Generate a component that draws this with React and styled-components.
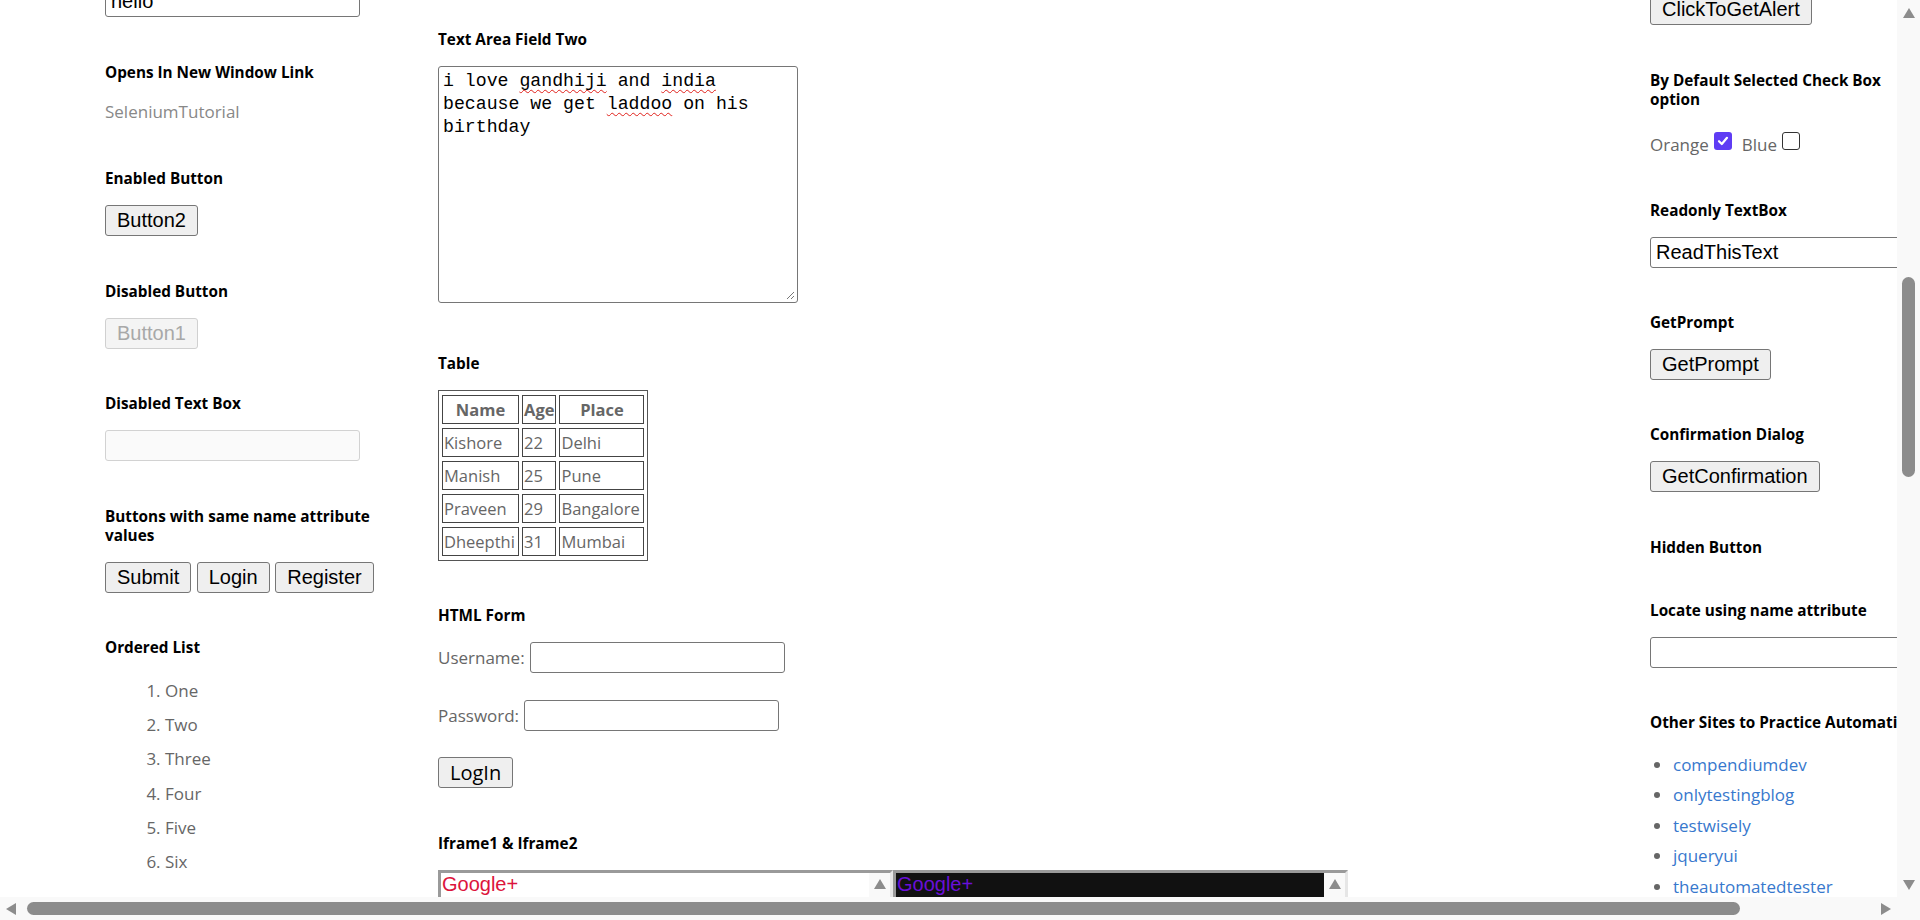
import { styled, createGlobalStyle } from "styled-components"

// scroll state of the page window (what the screenshot shows)
const V_THUMB = { offset: 252, size: 200 }
const H_THUMB = { offset: 5, size: 1713 }

const people = [
    { name: "Kishore", age: 22, place: "Delhi" },
    { name: "Manish", age: 25, place: "Pune" },
    { name: "Praveen", age: 29, place: "Bangalore" },
    { name: "Dheepthi", age: 31, place: "Mumbai" },
]

const numbers = ["One", "Two", "Three", "Four", "Five", "Six"]

const sites = ["compendiumdev", "onlytestingblog", "testwisely", "jqueryui", "theautomatedtester"]

const Arrow = ({ dir }) => {
    const points = {
        up: "6,0 12,10 0,10",
        down: "0,0 12,0 6,10",
        left: "10,0 10,12 0,6",
        right: "0,0 10,6 0,12",
    }[dir]
    const vertical = dir === "up" || dir === "down"
    return (
        <svg width={vertical ? 12 : 10} height={vertical ? 10 : 12} viewBox={vertical ? "0 0 12 10" : "0 0 10 12"}>
            <polygon points={points} fill="#8c8c8c" />
        </svg>
    )
}

const CheckBox = ({ checked }) => (
    <Box $checked={checked}>
        {checked && (
            <svg width="14" height="14" viewBox="0 0 14 14">
                <path d="M3 7.2 L5.8 10 L11 3.8" fill="none" stroke="#fff" strokeWidth="2.2" strokeLinecap="round" strokeLinejoin="round" />
            </svg>
        )}
    </Box>
)

const App = () => {
    return (
        <>
            <GlobalStyle />
            <Window>
                <Viewport>
                    <Page>
                        {/* left column */}
                        <Column $top={6}>
                            <Widget>
                                <TextInput defaultValue="hello" />
                            </Widget>
                            <Widget>
                                <Heading>Opens In New Window Link</Heading>
                                <PlainLink href="#">SeleniumTutorial</PlainLink>
                            </Widget>
                            <Widget>
                                <Heading>Enabled Button</Heading>
                                <Button>Button2</Button>
                            </Widget>
                            <Widget>
                                <Heading>Disabled Button</Heading>
                                <Button disabled>Button1</Button>
                            </Widget>
                            <Widget>
                                <Heading>Disabled Text Box</Heading>
                                <TextInput disabled />
                            </Widget>
                            <Widget>
                                <Heading>Buttons with same name attribute values</Heading>
                                <ButtonRow>
                                    <Button>Submit</Button>
                                    <Button>Login</Button>
                                    <Button>Register</Button>
                                </ButtonRow>
                            </Widget>
                            <Widget>
                                <Heading>Ordered List</Heading>
                                <NumberList>
                                    {numbers.map(n => <li key={n}>{n}</li>)}
                                </NumberList>
                            </Widget>
                        </Column>

                        {/* middle column */}
                        <Column $top={49.5}>
                            <Widget $gap={51}>
                                <Heading>Text Area Field Two</Heading>
                                <TextAreaBox role="textbox">
                                    i love <Typo>gandhiji</Typo> and <Typo>india</Typo> because we get <Typo>laddoo</Typo> on his birthday
                                    <Grip width="10" height="10" viewBox="0 0 10 10">
                                        <path d="M9 2 L2 9 M9 6 L6 9" stroke="#777" strokeWidth="1" />
                                    </Grip>
                                </TextAreaBox>
                            </Widget>
                            <Widget>
                                <Heading>Table</Heading>
                                <DataTable>
                                    <thead>
                                        <tr>
                                            <th>Name</th>
                                            <th>Age</th>
                                            <th>Place</th>
                                        </tr>
                                    </thead>
                                    <tbody>
                                        {people.map(p => (
                                            <tr key={p.name}>
                                                <td>{p.name}</td>
                                                <td>{p.age}</td>
                                                <td>{p.place}</td>
                                            </tr>
                                        ))}
                                    </tbody>
                                </DataTable>
                            </Widget>
                            <Widget>
                                <Heading>HTML Form</Heading>
                                <FormRow>
                                    <FieldLabel>Username:</FieldLabel>
                                    <TextInput />
                                </FormRow>
                                <FormRow>
                                    <FieldLabel>Password:</FieldLabel>
                                    <TextInput type="password" />
                                </FormRow>
                                <Button $pageFont>LogIn</Button>
                            </Widget>
                            <Widget>
                                <Heading>Iframe1 &amp; Iframe2</Heading>
                                <FrameRow>
                                    <Frame>
                                        <FrameBody>
                                            <FrameLink $color="#dc143c">Google+</FrameLink>
                                        </FrameBody>
                                        <FrameScroll>
                                            <Arrow dir="up" />
                                        </FrameScroll>
                                    </Frame>
                                    <Frame>
                                        <FrameBody $dark>
                                            <FrameLink $color="#6a0fd8">Google+</FrameLink>
                                        </FrameBody>
                                        <FrameScroll>
                                            <Arrow dir="up" />
                                        </FrameScroll>
                                    </Frame>
                                </FrameRow>
                            </Widget>
                        </Column>

                        {/* right column */}
                        <Column $top={14}>
                            <Widget>
                                <Button>ClickToGetAlert</Button>
                            </Widget>
                            <Widget>
                                <Heading>By Default Selected Check Box option</Heading>
                                <CheckRow>
                                    <Option>Orange <CheckBox checked /></Option>
                                    <Option>Blue <CheckBox /></Option>
                                </CheckRow>
                            </Widget>
                            <Widget $gap={44.5}>
                                <Heading>Readonly TextBox</Heading>
                                <TextInput readOnly defaultValue="ReadThisText" />
                            </Widget>
                            <Widget>
                                <Heading>GetPrompt</Heading>
                                <Button>GetPrompt</Button>
                            </Widget>
                            <Widget>
                                <Heading>Confirmation Dialog</Heading>
                                <Button>GetConfirmation</Button>
                            </Widget>
                            <Widget $gap={44}>
                                <Heading>Hidden Button</Heading>
                            </Widget>
                            <Widget>
                                <Heading>Locate using name attribute</Heading>
                                <TextInput name="locate" />
                            </Widget>
                            <Widget>
                                <Heading $nowrap>Other Sites to Practice Automation</Heading>
                                <SiteList>
                                    {sites.map(s => (
                                        <li key={s}><a href="#">{s}</a></li>
                                    ))}
                                </SiteList>
                            </Widget>
                        </Column>
                    </Page>
                </Viewport>

                <VScroll>
                    <ArrowCell><Arrow dir="up" /></ArrowCell>
                    <VThumb $offset={V_THUMB.offset} $size={V_THUMB.size} />
                    <Spacer />
                    <ArrowCell><Arrow dir="down" /></ArrowCell>
                </VScroll>

                <HScroll>
                    <ArrowCell><Arrow dir="left" /></ArrowCell>
                    <HThumb $offset={H_THUMB.offset} $size={H_THUMB.size} />
                    <Spacer />
                    <ArrowCell><Arrow dir="right" /></ArrowCell>
                </HScroll>

                <Corner />
            </Window>
        </>
    )
}

export default App

const GlobalStyle = createGlobalStyle`
    html, body {
        margin: 0;
        padding: 0;
        overflow: hidden;
        background: #fff;
    }
    body {
        font-family: "Open Sans", "DejaVu Sans", sans-serif;
    }
`

const Window = styled.div`
    width: 1920px;
    height: 920px;
    display: grid;
    grid-template-columns: 1897px 23px;
    grid-template-rows: 897px 23px;
    background: #f9f9f9;
`

const Viewport = styled.div`
    grid-column: 1;
    grid-row: 1;
    overflow: hidden;
    background: #fff;
`

const Page = styled.div`
    display: grid;
    grid-template-columns: 333px 1212px 260px;
    padding-left: 105px;
    margin-top: -20px;
    font-family: "Open Sans", sans-serif;
    font-size: 17px;
    color: #666;
`

const Column = styled.div`
    padding-top: ${({ $top }) => $top}px;
    min-width: 0;
`

const Widget = styled.section`
    margin-bottom: ${({ $gap }) => $gap ?? 45.5}px;
`

const Heading = styled.h2`
    margin: 0 0 17px;
    max-width: 300px;
    font: bold 15.3px/19px "Open Sans", sans-serif;
    color: #000;
    white-space: ${({ $nowrap }) => $nowrap ? "nowrap" : "normal"};
`

const PlainLink = styled.a`
    display: block;
    line-height: 25px;
    color: #888;
    text-decoration: none;
`

const TextInput = styled.input`
    display: block;
    box-sizing: border-box;
    width: 255px;
    height: 31px;
    margin: 0;
    padding: 0 5px;
    border: 1px solid #767676;
    border-radius: 3px;
    background: #fff;
    font: 20px "Liberation Sans", Arial, sans-serif;
    color: #000;
    outline: none;

    &:disabled {
        background: #fafafa;
        border-color: #d2d2d2;
    }
`

const Button = styled.button`
    box-sizing: border-box;
    height: 31px;
    margin: 0;
    padding: 0 11px;
    border: 1px solid #767676;
    border-radius: 3px;
    background: #efefef;
    font: 20px/23px ${({ $pageFont }) => $pageFont ? `"Open Sans", sans-serif` : `"Liberation Sans", Arial, sans-serif`};
    color: #000;

    &:disabled {
        background: #f4f4f4;
        border-color: #d0d0d0;
        color: #a8a8a8;
    }
`

const ButtonRow = styled.div`
    display: flex;
    gap: 5.5px;
`

const NumberList = styled.ol`
    margin: 0;
    padding-left: 60px;

    li {
        line-height: 34.2px;
    }
`

const TextAreaBox = styled.div`
    position: relative;
    box-sizing: border-box;
    width: 360px;
    height: 237px;
    padding: 3px 4px;
    border: 1px solid #767676;
    border-radius: 3px;
    font: 18.2px/23px "Liberation Mono", "DejaVu Sans Mono", monospace;
    color: #000;
    overflow: hidden;
`

const Typo = styled.span`
    text-decoration: underline wavy #e0201a;
    text-decoration-thickness: 1px;
    text-decoration-skip-ink: none;
    text-underline-offset: 3px;
`

const Grip = styled.svg`
    position: absolute;
    right: 2px;
    bottom: 2px;
`

const DataTable = styled.table`
    border: 1px solid #555;
    border-spacing: 3px 4px;
    font-size: 16.5px;
    color: #666;

    th, td {
        box-sizing: border-box;
        height: 29px;
        padding: 0 1px;
        border: 1px solid #444;
        line-height: 27px;
        white-space: nowrap;
    }

    th {
        font-weight: bold;
        text-align: center;
    }

    td {
        text-align: left;
    }

    th:nth-child(1) { width: 77px; }
    th:nth-child(2) { width: 34px; }
    th:nth-child(3) { width: 85px; }
`

const FormRow = styled.div`
    display: flex;
    align-items: center;
    gap: 5px;
    margin-bottom: 26.5px;
`

const FieldLabel = styled.label`
    line-height: 23px;
`

const FrameRow = styled.div`
    display: flex;
`

const Frame = styled.div`
    box-sizing: border-box;
    display: flex;
    width: 455px;
    height: 150px;
    border: 3px solid;
    border-color: #9a9a9a #e6e6e6 #e6e6e6 #9a9a9a;
`

const FrameBody = styled.div`
    flex: 1;
    padding: 0 1px;
    background: ${({ $dark }) => $dark ? "#111" : "#fff"};
`

const FrameLink = styled.a`
    font: 20px/23px "Liberation Sans", Arial, sans-serif;
    color: ${({ $color }) => $color};
`

const FrameScroll = styled.div`
    width: 21px;
    display: flex;
    justify-content: center;
    padding-top: 6px;
    box-sizing: border-box;
    background: #f9f9f9;
`

const CheckRow = styled.div`
    display: flex;
    align-items: flex-start;
    height: 30px;
`

const Option = styled.label`
    display: flex;
    align-items: flex-start;
    gap: 5px;
    margin-right: 10px;
    padding-top: 7px;
    line-height: 23px;
`

const Box = styled.span`
    box-sizing: border-box;
    display: flex;
    align-items: center;
    justify-content: center;
    width: 18px;
    height: 18px;
    margin-top: -1px;
    border-radius: 3px;
    border: ${({ $checked }) => $checked ? "none" : "1.5px solid #333"};
    background: ${({ $checked }) => $checked ? "#5f3cf4" : "#fff"};
`

const SiteList = styled.ul`
    margin: 0;
    padding: 1px 0 0 23px;

    li {
        line-height: 30.4px;
    }

    a {
        color: #3778cd;
        text-decoration: none;
    }
`

const VScroll = styled.div`
    grid-column: 2;
    grid-row: 1;
    display: flex;
    flex-direction: column;
    align-items: center;
`

const HScroll = styled.div`
    grid-column: 1;
    grid-row: 2;
    display: flex;
    align-items: center;
`

const ArrowCell = styled.div`
    flex: 0 0 25px;
    width: 23px;
    height: 23px;
    display: flex;
    align-items: center;
    justify-content: center;

    ${HScroll} & {
        flex-basis: 22px;
    }
`

const VThumb = styled.div`
    flex: 0 0 ${({ $size }) => $size}px;
    width: 13px;
    margin-top: ${({ $offset }) => $offset}px;
    border-radius: 7px;
    background: #8c8c8c;
`

const HThumb = styled.div`
    flex: 0 0 ${({ $size }) => $size}px;
    height: 13px;
    margin-left: ${({ $offset }) => $offset}px;
    border-radius: 7px;
    background: #8c8c8c;
`

const Spacer = styled.div`
    flex: 1;
`

const Corner = styled.div`
    grid-column: 2;
    grid-row: 2;
    background: #f9f9f9;
`
